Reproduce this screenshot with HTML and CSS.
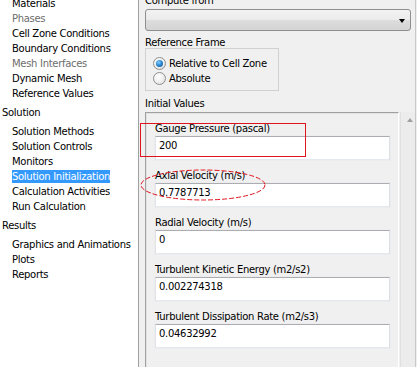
FILE: index.html
```html
<!DOCTYPE html>
<html>
<head>
<meta charset="utf-8">
<link rel="stylesheet" href="styles.css">
</head>
<body>
<div class="app">
  <div class="tree">
    <div class="tree-list">
      <div class="item">Materials</div>
      <div class="item dis">Phases</div>
      <div class="item">Cell Zone Conditions</div>
      <div class="item">Boundary Conditions</div>
      <div class="item dis">Mesh Interfaces</div>
      <div class="item">Dynamic Mesh</div>
      <div class="item">Reference Values</div>
      <div class="cat">Solution</div>
      <div class="item">Solution Methods</div>
      <div class="item">Solution Controls</div>
      <div class="item">Monitors</div>
      <div class="item"><span class="sel">Solution Initialization</span></div>
      <div class="item">Calculation Activities</div>
      <div class="item">Run Calculation</div>
      <div class="cat">Results</div>
      <div class="item">Graphics and Animations</div>
      <div class="item">Plots</div>
      <div class="item">Reports</div>
    </div>
  </div>
  <div class="panel">
    <div class="lbl top-lbl">Compute from</div>
    <div class="combo"><span class="arrow"></span></div>
    <div class="lbl rf-lbl">Reference Frame</div>
    <div class="rf-box">
      <div class="radio-row"><span class="radio on"></span>Relative to Cell Zone</div>
      <div class="radio-row"><span class="radio"></span>Absolute</div>
    </div>
    <div class="lbl iv-lbl">Initial Values</div>
    <div class="iv">
      <div class="iv-body">
        <div class="field">
          <div class="flbl">Gauge Pressure (pascal)</div>
          <div class="input">200</div>
        </div>
        <div class="field">
          <div class="flbl">Axial Velocity (m/s)</div>
          <div class="input">0.7787713</div>
        </div>
        <div class="field">
          <div class="flbl">Radial Velocity (m/s)</div>
          <div class="input">0</div>
        </div>
        <div class="field">
          <div class="flbl">Turbulent Kinetic Energy (m2/s2)</div>
          <div class="input">0.002274318</div>
        </div>
        <div class="field">
          <div class="flbl">Turbulent Dissipation Rate (m2/s3)</div>
          <div class="input">0.04632992</div>
        </div>
      </div>
      <div class="vscroll"><span class="up"></span></div>
    </div>
  </div>
</div>
<div class="mark-rect"></div>
<svg class="mark-ellipse" width="130" height="34" viewBox="0 0 130 34">
  <ellipse cx="65" cy="17" rx="62" ry="15" fill="none" stroke="#e0141e" stroke-width="1" stroke-dasharray="5 2"/>
</svg>
</body>
</html>
```
FILE: styles.css
```css
html, body {
  margin: 0;
  padding: 0;
}
body {
  width: 417px;
  height: 367px;
  overflow: hidden;
  position: relative;
  font-family: "DejaVu Sans", sans-serif;
  font-size: 10px;
  letter-spacing: -0.3px;
  color: #000;
  background: #f0f0f0;
}
.app {
  display: flex;
  height: 367px;
}
.tree {
  width: 138px;
  flex: none;
  background: #fff;
  border-right: 1px solid #a0a0a0;
  overflow: hidden;
}
.tree-list {
  margin-top: -4px;
}
.item {
  line-height: 15px;
  height: 15px;
  padding-left: 12px;
  white-space: nowrap;
}
.item.dis {
  color: #6d6d6d;
}
.cat {
  line-height: 23px;
  height: 23px;
  padding-left: 2px;
}
.sel {
  background: #3399ff;
  color: #fff;
  padding: 1px 0;
}
.panel {
  flex: 1;
  position: relative;
  padding-left: 6px;
  border-right: 1px solid #c8c8c8;
  margin-right: 1px;
}
.lbl {
  line-height: 13px;
  height: 13px;
  white-space: nowrap;
}
.top-lbl {
  margin-top: -6px;
}
.combo {
  margin-top: 2px;
  width: 264px;
  height: 20px;
  border: 1px solid #8f8f8f;
  border-radius: 3px;
  background: linear-gradient(#f2f2f2 0%, #ebebeb 50%, #dddddd 51%, #d4d4d4 100%);
  position: relative;
}
.arrow {
  position: absolute;
  right: 5px;
  top: 9px;
  width: 0;
  height: 0;
  border-left: 3.5px solid transparent;
  border-right: 3.5px solid transparent;
  border-top: 4px solid #000;
}
.rf-lbl {
  margin-top: 5px;
}
.rf-box {
  margin-top: -1px;
  border: 1px solid #d0d0d0;
  padding: 7px 0 0 7px;
  box-sizing: border-box;
  height: 43px;
  width: 134px;
}
.radio-row {
  display: flex;
  align-items: center;
  height: 15px;
  white-space: nowrap;
}
.radio {
  width: 11px;
  height: 11px;
  border-radius: 50%;
  border: 1px solid #8e8f8f;
  background: radial-gradient(circle at 40% 35%, #ffffff 0%, #f0f0f0 50%, #d6d6d6 100%);
  margin-right: 3px;
  flex: none;
  position: relative;
}
.radio.on::after {
  content: "";
  position: absolute;
  left: 2px;
  top: 2px;
  width: 7px;
  height: 7px;
  border-radius: 50%;
  background: radial-gradient(circle at 40% 35%, #8ed0ff 0%, #2a8ad6 45%, #0c4d8c 100%);
}
.iv-lbl {
  margin-top: 6px;
}
.iv {
  margin-top: 2px;
  display: flex;
  height: 260px;
}
.iv-body {
  width: 254px;
  border-top: 1px solid #a0a0a0;
  border-left: 1px solid #a0a0a0;
  border-right: 1px solid #fff;
  box-shadow: inset 1px 1px 0 #e3e3e3;
  padding: 8px 0 0 9px;
  box-sizing: border-box;
}
.field {
  height: 47px;
}
.flbl {
  line-height: 15px;
  height: 15px;
  white-space: nowrap;
}
.input {
  width: 235px;
  height: 24px;
  box-sizing: border-box;
  background: #fff;
  border: 1px solid;
  border-color: #abadb3 #dbdfe6 #e3e9ef #e2e3ea;
  box-shadow: 0 0 0 1px #ececec;
  padding: 2px 0 0 3px;
  line-height: 14px;
  font-size: 10px;
}
.vscroll {
  width: 14px;
  margin-left: 1px;
  border-left: 1px solid #e0e0e0;
  background: #ececec;
  position: relative;
}
.up {
  position: absolute;
  left: 6px;
  top: 6px;
  width: 0;
  height: 0;
  border-left: 3.5px solid transparent;
  border-right: 3.5px solid transparent;
  border-bottom: 4px solid #a0a0a0;
}
.mark-rect {
  position: absolute;
  left: 140px;
  top: 123px;
  width: 164px;
  height: 32px;
  border: 1px solid #e0141e;
}
.mark-ellipse {
  position: absolute;
  left: 138px;
  top: 168px;
}
```
